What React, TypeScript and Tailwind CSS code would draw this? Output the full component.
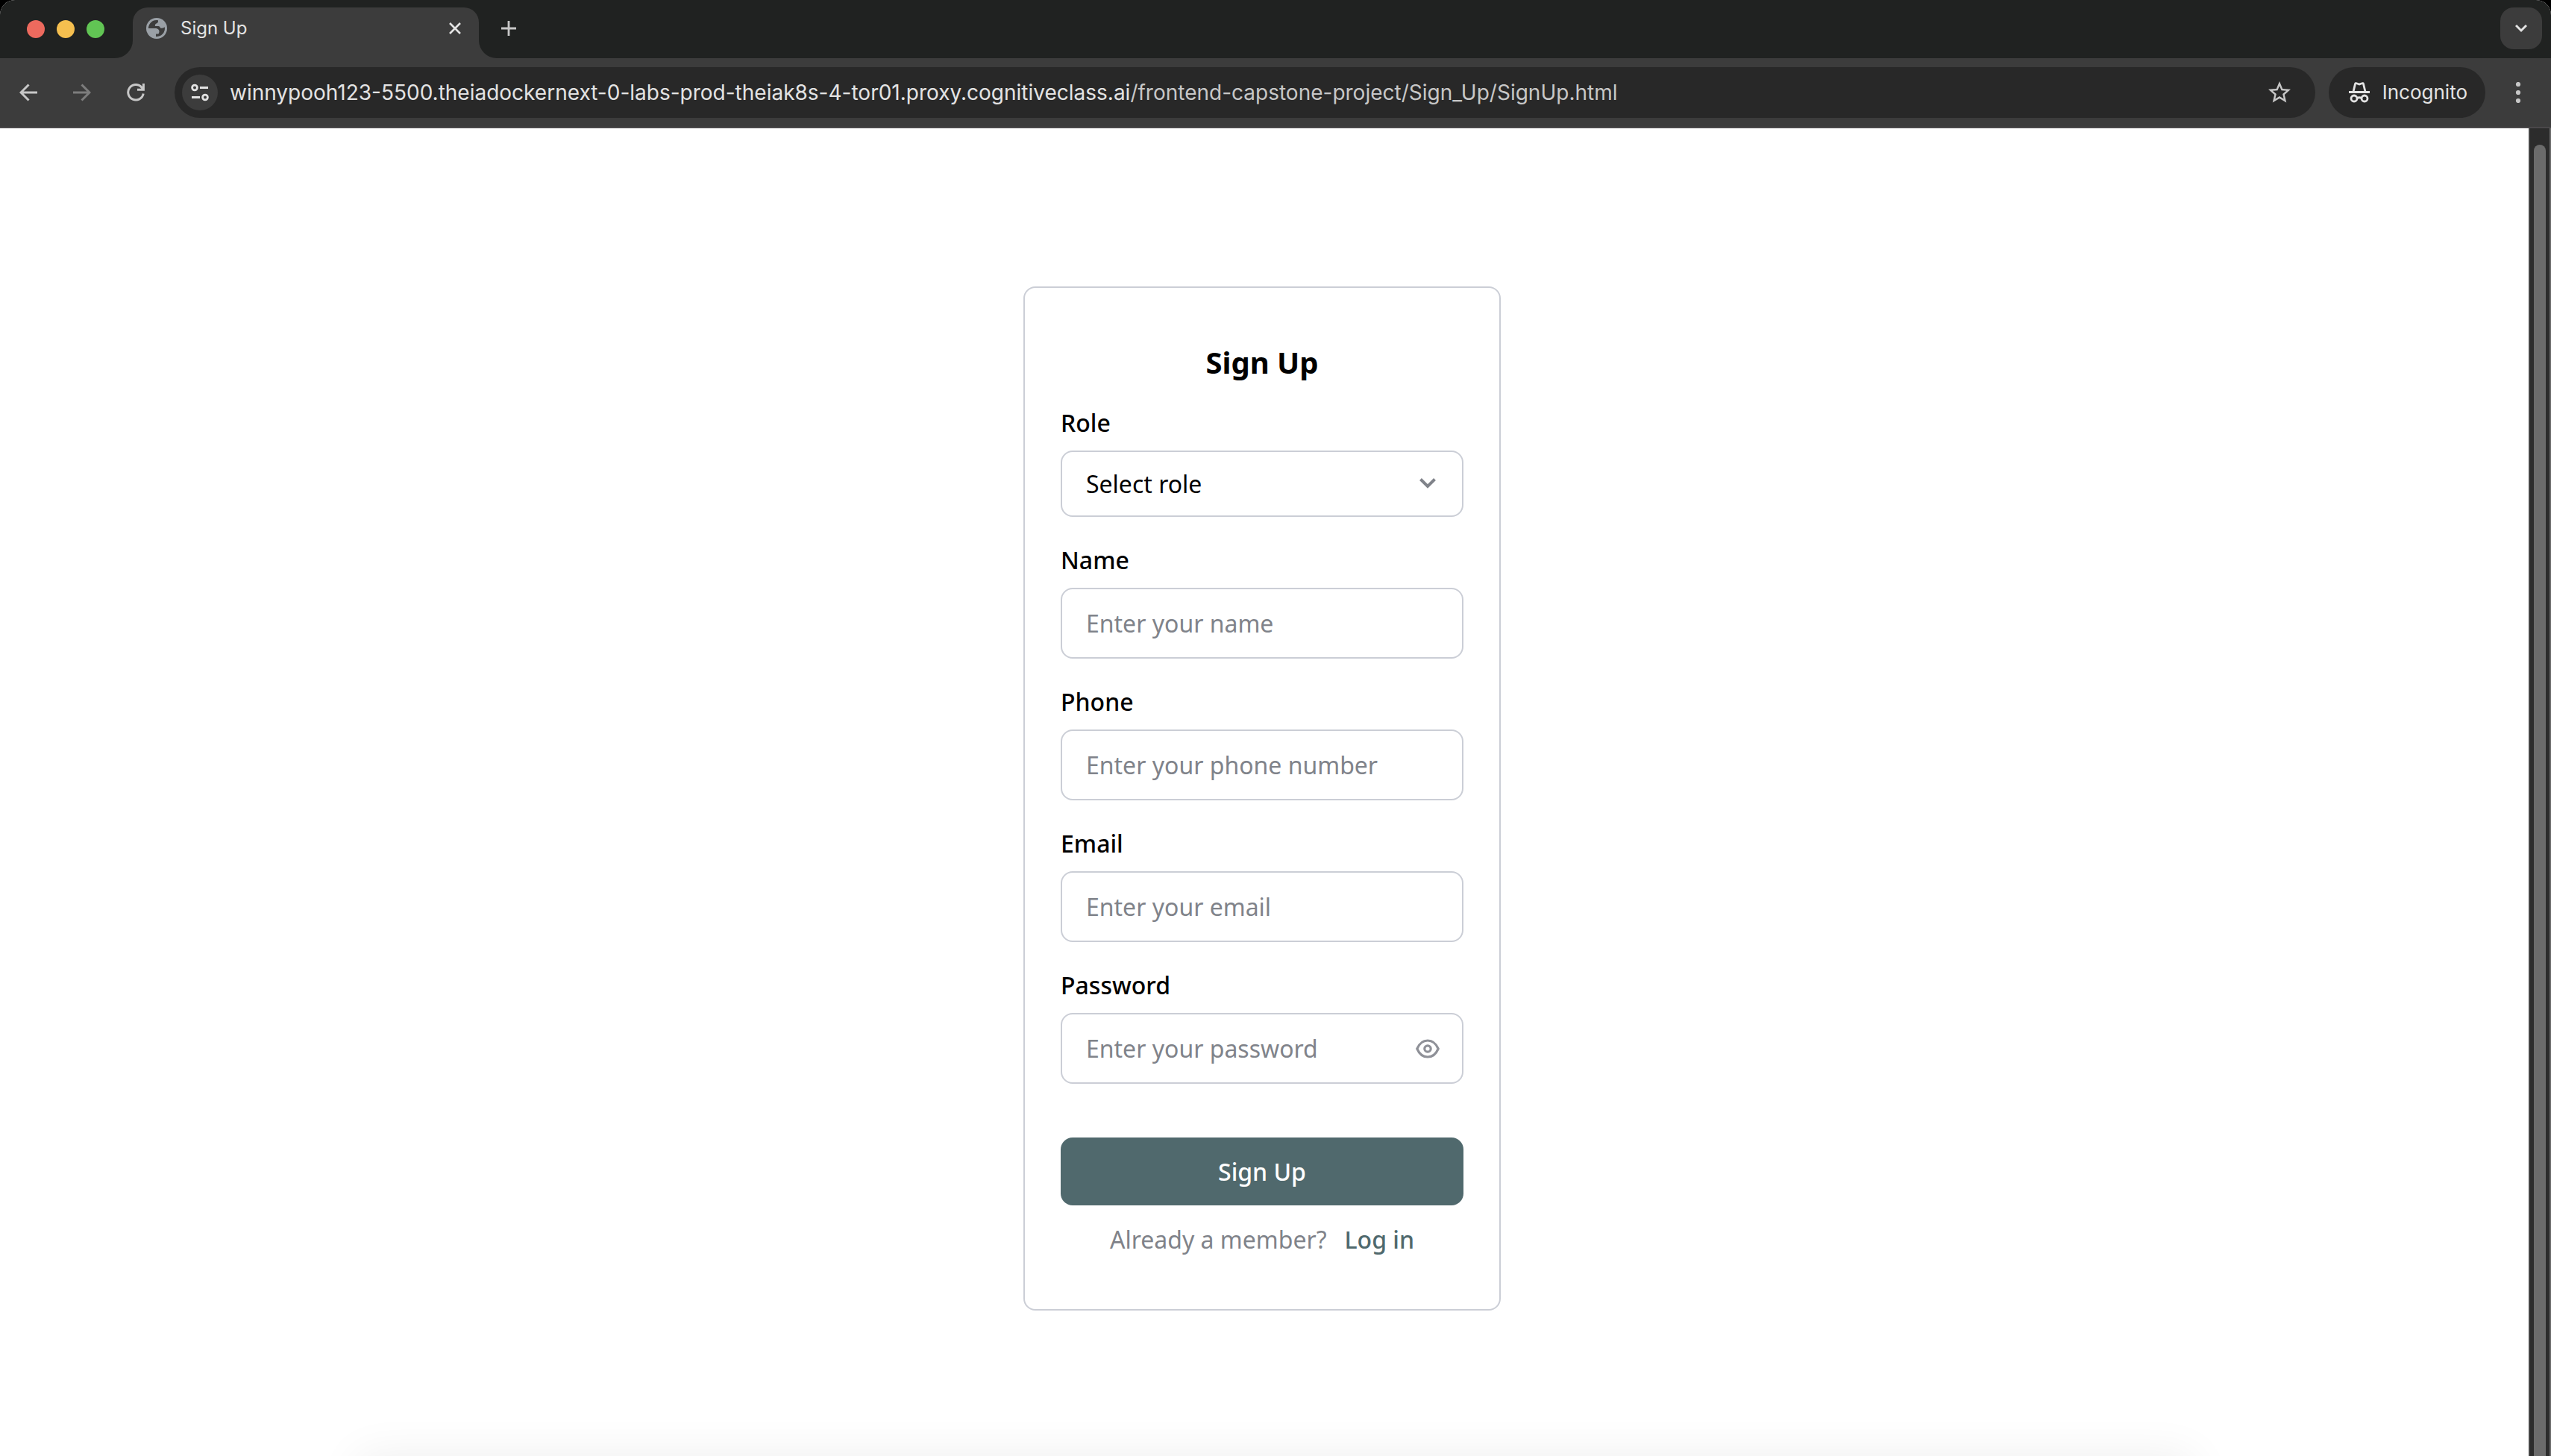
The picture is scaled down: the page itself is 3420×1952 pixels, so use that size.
import React from "react";
import { MdStarBorder } from "react-icons/md";

const icon = { fill: "none", stroke: "currentColor", "aria-hidden": true } as const;

function TabStrip() {
  return (
    <div className="flex h-[78px] items-end bg-[#202221]">
      <div className="flex h-full w-[154px] shrink-0 items-center gap-4 pl-9">
        <button aria-label="Close window" className="size-6 rounded-full bg-[#ed6a5e]" />
        <button aria-label="Minimize window" className="size-6 rounded-full bg-[#f5bf4f]" />
        <button aria-label="Zoom window" className="size-6 rounded-full bg-[#61c554]" />
      </div>
      <svg className="size-6 shrink-0" viewBox="0 0 24 24" aria-hidden="true">
        <path d="M24 0V24H0A24 24 0 0 0 24 0Z" fill="#3c3c3c" />
      </svg>
      <div className="flex h-[68px] w-[464px] items-center rounded-t-[20px] bg-[#3c3c3c] pr-6 pb-3 pl-[18px]">
        <svg className="size-7" viewBox="0 0 28 28" aria-hidden="true">
          <circle cx="14" cy="14" r="14" fill="#9aa0a6" />
          <path
            d="M3 14A11 11 0 0 1 16 3.200Q16.500 6.500 13.500 7.500Q11.500 8 11.800 11H16.500Q18.500 11.300 19 13.500Q22 14.500 24.800 12.200A11 11 0 0 1 13 25V21.500H15.500Q17.500 21 17.500 18.500Q17.500 14.600 13 14Z"
            fill="#3c3c3c"
          />
          <path d="M3 14H11Q15.500 14.300 15.500 18V19Q12.800 19 12.800 21.500V25A11 11 0 0 1 3 14Z" fill="#9aa0a6" />
        </svg>
        <span className="ml-[18px] flex-1 text-[24px] leading-8 text-[#e3e3e3]">Sign Up</span>
        <button aria-label="Close tab" className="text-[#e3e3e3]">
          <svg className="size-4" viewBox="0 0 16 16" strokeWidth="2.6" {...icon}>
            <path d="M1 1 15 15M15 1 1 15" />
          </svg>
        </button>
      </div>
      <svg className="size-6 shrink-0" viewBox="0 0 24 24" aria-hidden="true">
        <path d="M0 0V24H24A24 24 0 0 1 0 0Z" fill="#3c3c3c" />
      </svg>
      <button aria-label="New tab" className="mb-[30px] ml-[6px] text-[#c7c7c7]">
        <svg className="size-5" viewBox="0 0 20 20" strokeWidth="2.8" {...icon}>
          <path d="M10 0V20M0 10H20" />
        </svg>
      </button>
      <button
        aria-label="Search tabs"
        className="mr-3 mb-3 ml-auto flex size-14 items-center justify-center rounded-[18px] bg-[#3c3c3c] text-[#e3e3e3]"
      >
        <svg className="size-4" viewBox="0 0 16 16" strokeWidth="3" {...icon}>
          <path d="M1 4 8 11 15 4" />
        </svg>
      </button>
    </div>
  );
}

function Toolbar() {
  return (
    <div className="flex h-[94px] items-center border-b-2 border-[#4a484a] bg-[#3c3c3c] pl-[26px] text-[#c7c7c7]">
      <button aria-label="Back">
        <svg className="size-6" viewBox="0 0 24 24" strokeWidth="3" {...icon}>
          <path d="M24 12H2M12.5 1.5 2 12 12.5 22.5" />
        </svg>
      </button>
      <button aria-label="Forward" className="ml-12 text-[#7d7d7d]">
        <svg className="size-6" viewBox="0 0 24 24" strokeWidth="3" {...icon}>
          <path d="M0 12H22M11.5 1.5 22 12 11.5 22.5" />
        </svg>
      </button>
      <button aria-label="Reload" className="ml-12">
        <svg className="size-6" viewBox="0 0 24 24" strokeWidth="3" {...icon}>
          <path d="M22.2 13.5A10.3 10.3 0 1 1 20 5.2L22 8M22.4 0V8.3H14" />
        </svg>
      </button>
      <div className="ml-10 flex h-[68px] flex-1 items-center rounded-full bg-[#282828] pr-[30px] pl-[10px]">
        <button
          aria-label="View site information"
          className="flex size-12 items-center justify-center rounded-full bg-[#3c3c3c] text-[#e3e3e3]"
        >
          <svg className="size-6" viewBox="0 0 24 24" strokeWidth="2.8" {...icon}>
            <circle cx="5" cy="5.5" r="3.4" />
            <circle cx="19" cy="18.5" r="3.4" />
            <path d="M12 5.5H23M1 18.5H12" />
          </svg>
        </button>
        <div role="textbox" aria-label="Address" className="ml-4 flex-1 text-[28px] leading-9 whitespace-nowrap">
          <span className="text-[#e3e3e3]">
            winnypooh123-5500.theiadockernext-0-labs-prod-theiak8s-4-tor01.proxy.cognitiveclass.ai
          </span>
          /frontend-capstone-project/Sign_Up/SignUp.html
        </div>
        <button aria-label="Bookmark this tab">
          <MdStarBorder className="size-9" />
        </button>
      </div>
      <button className="ml-[18px] flex h-[68px] items-center gap-4 rounded-full bg-[#282828] pr-6 pl-[26px] text-[26px] leading-9 text-[#e3e3e3]">
        <svg className="h-7 w-[30px]" viewBox="0 0 30 28" strokeWidth="2.8" {...icon}>
          <path d="M1 13.5H29" strokeWidth="3" />
          <path d="M7 13 9.5 2.5Q10 1.2 11.4 1.8L15 3 18.6 1.8Q20 1.2 20.5 2.5L23 13" />
          <circle cx="8" cy="22" r="4" />
          <circle cx="22" cy="22" r="4" />
          <path d="M12 21.5Q15 20 18 21.5" />
        </svg>
        Incognito
      </button>
      <button aria-label="Chrome menu" className="mr-10 ml-10">
        <svg className="h-7 w-2" viewBox="0 0 8 28" fill="currentColor" aria-hidden="true">
          <circle cx="4" cy="3" r="3.1" />
          <circle cx="4" cy="14" r="3.1" />
          <circle cx="4" cy="25" r="3.1" />
        </svg>
      </button>
    </div>
  );
}

function Field({ id, label, children }: { id: string; label: string; children: React.ReactNode }) {
  return (
    <div className="mb-[34px]">
      <label htmlFor={id} className="mb-[13px] block leading-[48px] font-medium">
        {label}
      </label>
      <div className="relative">{children}</div>
    </div>
  );
}

const inputClass =
  "block h-[95px] w-full rounded-2xl border-2 border-[#cbced6] bg-white pr-20 pl-8 placeholder:text-[#80838a] placeholder:opacity-100";

function SignUpForm() {
  return (
    <form
      onSubmit={(e) => e.preventDefault()}
      className="w-full max-w-[640px] rounded-2xl border-2 border-[#cbced6] px-12 pt-[72px] pb-[69px] font-['Noto_Sans',sans-serif] text-[32px] text-black"
    >
      <h1 className="mb-[29px] text-center text-[40px] leading-[56px] font-bold">Sign Up</h1>
      <Field id="role" label="Role">
        <select
          id="role"
          className="block h-[89px] w-full appearance-none rounded-2xl border-2 border-[#cbced6] bg-white pr-20 pl-8"
        >
          <option>Select role</option>
          <option>Patient</option>
          <option>Doctor</option>
        </select>
        <svg
          className="pointer-events-none absolute top-[34px] right-9 h-5 w-6 text-[#80838a]"
          viewBox="0 0 24 20"
          strokeWidth="4"
          {...icon}
        >
          <path d="M2.5 4.5 12 14 21.5 4.5" />
        </svg>
      </Field>
      <Field id="name" label="Name">
        <input id="name" type="text" placeholder="Enter your name" className={inputClass} />
      </Field>
      <Field id="phone" label="Phone">
        <input id="phone" type="tel" placeholder="Enter your phone number" className={inputClass} />
      </Field>
      <Field id="email" label="Email">
        <input id="email" type="email" placeholder="Enter your email" className={inputClass} />
      </Field>
      <Field id="password" label="Password">
        <input id="password" type="password" placeholder="Enter your password" className={inputClass} />
        <button type="button" aria-label="Show password" className="absolute inset-y-0 right-8 text-[#8f9198]">
          <svg className="h-7 w-8" viewBox="0 0 32 28" strokeWidth="3.2" {...icon}>
            <path d="M1.800 14C5 6.500 10 3 16 3S27 6.500 30.200 14C27 21.500 22 25 16 25S5 21.500 1.800 14Z" />
            <circle cx="16" cy="14" r="4.200" />
          </svg>
        </button>
      </Field>
      <button type="submit" className="mt-[38px] h-[91px] w-full rounded-2xl bg-[#50696d] font-medium text-white">
        Sign Up
      </button>
      <p className="mt-[22px] flex justify-center gap-6 leading-[48px] text-[#80838a]">
        Already a member?
        <a href="#login" className="font-medium text-[#50696d]">
          Log in
        </a>
      </p>
    </form>
  );
}

export default function App() {
  return (
    <div className="bg-black">
      <div className="relative flex min-h-screen flex-col overflow-hidden rounded-t-[20px] bg-white font-['Inter',sans-serif]">
        <header>
          <TabStrip />
          <Toolbar />
        </header>
        <div className="flex flex-1">
          <main className="flex flex-1 items-start justify-center pt-[212px] pr-[6px]">
            <SignUpForm />
          </main>
          <div className="flex w-[30px] justify-center border-r-2 border-l-2 border-r-[#6b6b6b] border-l-[#444] bg-[#2c2c2c] pt-[22px]">
            <div className="w-4 rounded-t-full bg-[#6b6b6b]" />
          </div>
        </div>
        <div className="pointer-events-none absolute inset-x-[480px] top-full h-20 shadow-[0_0_60px_rgba(0,0,0,0.07)]" />
      </div>
    </div>
  );
}
